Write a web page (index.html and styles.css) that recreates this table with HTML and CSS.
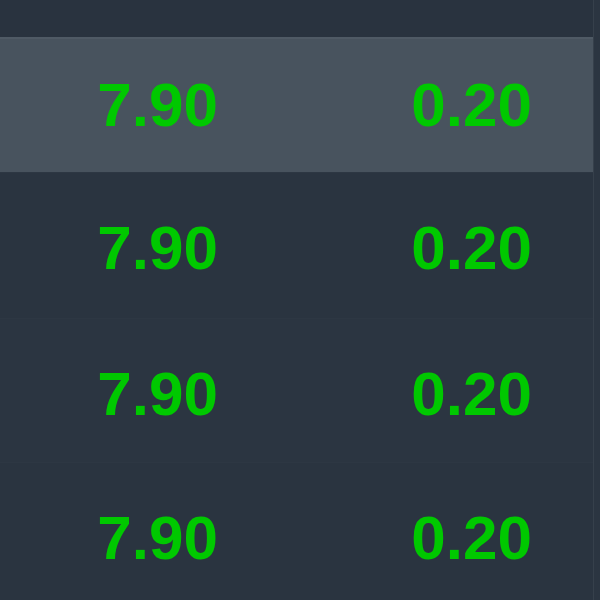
FILE: index.html
```html
<!DOCTYPE html>
<html>
<head>
    <title>Quotes</title>
    <meta name="viewport" content="width=device-width, initial-scale=1">
    <link rel="stylesheet" href="styles.css">
</head>
<body>
    <div class="board">
        <div class="board-top"></div>
        <div class="row active">
            <span class="cell price">7.90</span>
            <span class="cell change">0.20</span>
        </div>
        <div class="row">
            <span class="cell price">7.90</span>
            <span class="cell change">0.20</span>
        </div>
        <div class="row alt">
            <span class="cell price">7.90</span>
            <span class="cell change">0.20</span>
        </div>
        <div class="row">
            <span class="cell price">7.90</span>
            <span class="cell change">0.20</span>
        </div>
    </div>
</body>
</html>
```

FILE: styles.css
```css
html, body {
    margin: 0;
    padding: 0;
    background: #2b3541;
    height: 100%;
    overflow: hidden;
}
.board {
    width: 593px;
    height: 600px;
    border-right: 1px solid #36404b;
    background: #2a3440;
    font-family: "Liberation Sans", Arial, sans-serif;
    font-weight: bold;
    font-size: 62px;
    line-height: 62px;
}
.board-top {
    height: 37px;
    background: #29333f;
}
.row {
    display: flex;
    height: 146px;
    padding-top: 44px;
    box-sizing: border-box;
    background: #2a3440;
    border-top: 1px solid #2d3743;
}
.row.alt {
    height: 144px;
    background: #2b3541;
}
.row.active {
    height: 135px;
    padding-top: 35px;
    background: #48535e;
    border-top: 2px solid #4f5a65;
}
.cell {
    color: #00c800;
}
.price {
    width: 218px;
    text-align: right;
}
.change {
    width: 314px;
    text-align: right;
}
```
